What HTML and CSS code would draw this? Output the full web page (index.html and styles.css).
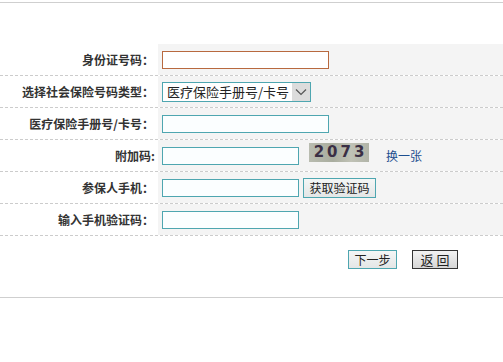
FILE: index.html
```html
<!DOCTYPE html>
<html lang="zh">
<head>
<meta charset="utf-8">
<link rel="stylesheet" href="styles.css">
</head>
<body>
<div class="page">
  <div class="topline"></div>
  <div class="form">
    <div class="row">
      <div class="label">身份证号码：</div>
      <div class="value"><input class="txt wide err" type="text"></div>
    </div>
    <div class="row">
      <div class="label">选择社会保险号码类型：</div>
      <div class="value">
        <div class="select">
          <span class="sel-text">医疗保险手册号/卡号</span>
          <span class="sel-arrow"><svg width="12" height="8" viewBox="0 0 12 8"><path d="M1 1.5 L6 6.5 L11 1.5" fill="none" stroke="#555" stroke-width="1.2"/></svg></span>
        </div>
      </div>
    </div>
    <div class="row">
      <div class="label">医疗保险手册号/卡号：</div>
      <div class="value"><input class="txt wide" type="text"></div>
    </div>
    <div class="row">
      <div class="label half">附加码:</div>
      <div class="value">
        <input class="txt short" type="text">
        <div class="captcha"><span>2073</span></div>
        <a class="link" href="#">换一张</a>
      </div>
    </div>
    <div class="row">
      <div class="label">参保人手机：</div>
      <div class="value">
        <input class="txt short" type="text">
        <button class="btn teal getcode">获取验证码</button>
      </div>
    </div>
    <div class="row">
      <div class="label">输入手机验证码：</div>
      <div class="value"><input class="txt short" type="text"></div>
    </div>
  </div>
  <div class="actions">
    <button class="btn teal next">下一步</button>
    <button class="btn dark back">返 回</button>
  </div>
  <div class="bottomline"></div>
</div>
</body>
</html>
```

FILE: styles.css
```css
html, body {
  margin: 0;
  padding: 0;
  background: #fff;
}
body {
  font-family: "Noto Sans CJK SC", "Liberation Sans", sans-serif;
  font-size: 12px;
  color: #333;
}
.page {
  width: 503px;
}
.topline {
  margin-top: 2px;
  border-top: 1px solid #cfcfcf;
  height: 41px;
}
.form {
  display: flex;
  flex-direction: column;
}
.row {
  display: grid;
  grid-template-columns: 158px 1fr;
  height: 32px;
  box-sizing: border-box;
  border-bottom: 1px dashed #cccccc;
}
.label {
  display: flex;
  align-items: center;
  justify-content: flex-end;
  padding-right: 4px;
  font-weight: bold;
  font-size: 12px;
  color: #333;
  background: #fff;
}
.label.half {
  padding-right: 3px;
}
.value {
  display: flex;
  align-items: center;
  padding-left: 4px;
  background: #f4f4f4;
}
.txt {
  box-sizing: border-box;
  height: 18px;
  border: 1px solid #4ea6b0;
  background: #fbfeff;
  margin: 0;
  padding: 0 2px;
  outline: none;
}
.txt.wide {
  width: 167px;
}
.txt.err {
  border-color: #b8693f;
  background: #fff;
}
.txt.short {
  width: 137px;
}
.select {
  box-sizing: border-box;
  width: 149px;
  height: 20px;
  margin-top: 0;
  border: 1px solid #4ea6b0;
  background: #fff;
  display: flex;
  align-items: stretch;
}
.sel-text {
  flex: 1;
  font-size: 13px;
  line-height: 18px;
  padding-left: 4px;
  color: #222;
  white-space: nowrap;
}
.sel-arrow {
  width: 18px;
  background: #dcdcdc;
  display: flex;
  align-items: center;
  justify-content: center;
}
.captcha {
  margin-left: 10px;
  width: 60px;
  height: 19px;
  margin-top: -7px;
  background: linear-gradient(90deg, #b9bcb0, #a9ad9f 40%, #c0c2b6 70%, #b1b4a8);
  display: flex;
  align-items: center;
  justify-content: center;
}
.captcha span {
  font-family: "DejaVu Sans", sans-serif;
  font-weight: bold;
  font-size: 15px;
  letter-spacing: 3px;
  color: #3a2f45;
  padding-left: 3px;
}
.link {
  margin-left: 17px;
  color: #1d4f8f;
  text-decoration: none;
  font-size: 12px;
}
.btn {
  box-sizing: border-box;
  height: 20px;
  margin: 0;
  padding: 0;
  font-family: "Noto Sans CJK SC", sans-serif;
  font-size: 12px;
  color: #222;
  line-height: 16px;
}
.btn.teal {
  border: 1px solid #4ea6b0;
  background: linear-gradient(#f4f6f6, #e4e6e6);
}
.getcode {
  width: 73px;
  margin-left: 4px;
}
.actions {
  height: 61px;
  display: flex;
  align-items: flex-start;
  padding-top: 14px;
  padding-left: 348px;
  box-sizing: border-box;
  gap: 15px;
}
.next {
  width: 49px;
  height: 19px;
}
.btn.dark {
  width: 46px;
  height: 19px;
  border: 1px solid #333;
  background: linear-gradient(#f2f2f2, #d6d6d6);
  font-size: 13px;
}
.bottomline {
  border-top: 1px solid #cfcfcf;
}
```
